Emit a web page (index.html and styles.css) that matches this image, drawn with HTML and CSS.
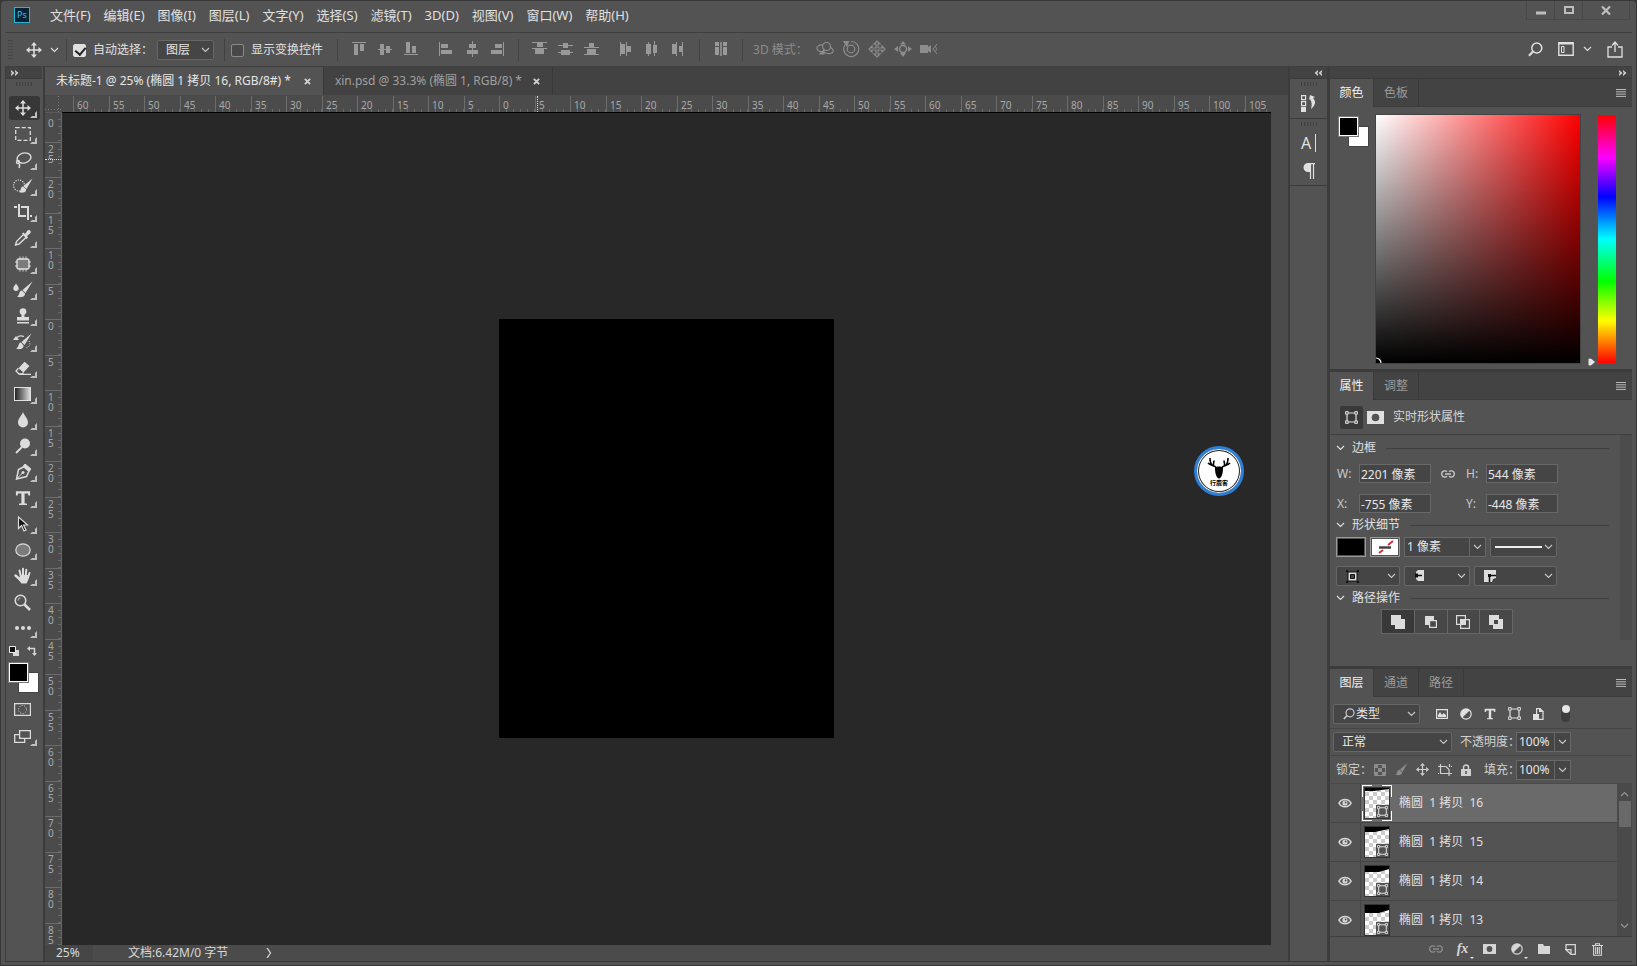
FILE: index.html
```html
<!DOCTYPE html>
<html lang="zh-CN">
<head>
<meta charset="utf-8">
<title>Photoshop</title>
<link rel="stylesheet" href="styles.css">
</head>
<body>
<svg class="sprite" aria-hidden="true">
  <symbol id="chev" viewBox="0 0 9 6"><path d="M1 1l3.500 3.500L8 1" fill="none" stroke="currentColor" stroke-width="1.100"/></symbol>
  <symbol id="move" viewBox="0 0 16 16"><path d="M8 2.500v11M2.500 8h11" stroke="currentColor" stroke-width="1.500"/><path d="M8 0l3 3.500H5zM8 16l3-3.500H5zM0 8l3.500-3v6zM16 8l-3.500-3v6z" fill="currentColor"/></symbol>
  <symbol id="brush" viewBox="0 0 18 18"><path d="M17 0L7 9l3.500 3.500z" fill="currentColor"/><path d="M6.500 9.500c-4 0-2.500 5-6 6.500 4 2 9.500.5 9.500-3z" fill="currentColor"/></symbol>
  <symbol id="box" viewBox="0 0 13 13"><path d="M2 2h9v9H2z" fill="none" stroke="currentColor" stroke-width="1.200"/><path d="M.6.600h2.600v2.600H.6zM9.800.600h2.600v2.600H9.800zM.6 9.800h2.600v2.600H.6zM9.800 9.800h2.600v2.600H9.800z" fill="#535353" stroke="currentColor"/></symbol>
  <symbol id="link" viewBox="0 0 14 8"><path d="M6 1.700C5.500 1 4.800.9 3.800.9a3 3 0 0 0 0 6.200c1 0 1.700-.2 2.200-.9M8 1.700c.5-.7 1.200-.8 2.200-.8a3 3 0 0 1 0 6.200c-1 0-1.700-.2-2.200-.9M4 4h6" fill="none" stroke="currentColor" stroke-width="1.300"/></symbol>
  <symbol id="search" viewBox="0 0 15 15"><circle cx="8.800" cy="6" r="5" fill="none" stroke="currentColor" stroke-width="1.500"/><path d="M5 9.500L1 13.800" stroke="currentColor" stroke-width="2"/></symbol>
  <symbol id="burger" viewBox="0 0 10 8"><path d="M0 .5h10M0 2.800h10M0 5.100h10M0 7.400h10" stroke="currentColor"/></symbol>
  <symbol id="half" viewBox="0 0 12 12"><circle cx="6" cy="6" r="5.200" fill="none" stroke="currentColor" stroke-width="1.200"/><path d="M9.800 2.200A5.400 5.400 0 0 0 2.200 9.800z" fill="currentColor"/></symbol>
  <symbol id="mask" viewBox="0 0 17 13"><path d="M0 0h17v13H0z" fill="currentColor"/><circle cx="8.500" cy="6.500" r="3.800" fill="#535353"/></symbol>
  <symbol id="tee" viewBox="0 0 14 14"><path d="M.8 1h12.400v3.800h-1.400L11.200 3H8.400v8.600l2.100.4v1.200h-7V12l2.100-.4V3H2.800l-.6 1.800H.8z" fill="currentColor"/></symbol>
  <symbol id="dblr" viewBox="0 0 8 6"><path d="M0 0l3.500 3L0 6V4l1-1-1-1zM4 0l3.500 3L4 6V4l1-1-1-1z" fill="currentColor"/></symbol>
  <symbol id="eye" viewBox="0 0 14 10"><path d="M1 5.200C3.500.2 10.500.2 13 5.200 10.500 10 3.500 10 1 5.200z" fill="none" stroke="currentColor" stroke-width="1.600"/><circle cx="7" cy="5" r="2.600" fill="currentColor"/><circle cx="7.600" cy="4.500" r=".9" fill="#535353"/></symbol>
  <symbol id="x" viewBox="0 0 8 8"><path d="M1 1l6 6M7 1L1 7" stroke="currentColor" stroke-width="2.200"/></symbol>
</svg>
<div class="window">
  <header class="menubar">
    <div class="logo">Ps</div>
    <nav class="menus">
      <button>文件(F)</button><button>编辑(E)</button><button>图像(I)</button><button>图层(L)</button><button>文字(Y)</button><button>选择(S)</button><button>滤镜(T)</button><button>3D(D)</button><button>视图(V)</button><button>窗口(W)</button><button>帮助(H)</button>
    </nav>
    <div class="winbtns">
      <button aria-label="最小化"><svg width="10" height="10"><path d="M0 8h10" stroke="currentColor" stroke-width="3"/></svg></button>
      <button aria-label="最大化"><svg width="10" height="8"><path d="M1 1h8v6H1z" fill="none" stroke="currentColor" stroke-width="2"/></svg></button>
      <button class="wide" aria-label="关闭"><svg width="10" height="9" viewBox="0 0 10 9"><path d="M1 .5l8 8M9 .5l-8 8" stroke="currentColor" stroke-width="2.200"/></svg></button>
    </div>
  </header>

  <div class="options">
    <i class="vgrip"></i>
    <button class="tool-pick" aria-label="移动工具"><svg width="16" height="16"><use href="#move"/></svg><svg width="9" height="6"><use href="#chev"/></svg></button>
    <i class="sep"></i>
    <label class="check"><input type="checkbox" checked><span>自动选择：</span></label>
    <div class="select pick-layer"><select aria-label="自动选择"><option>图层</option></select><svg width="9" height="6"><use href="#chev"/></svg></div>
    <i class="sep"></i>
    <label class="check"><input type="checkbox"><span>显示变换控件</span></label>
    <i class="sep"></i>
    <div class="aligns">
      <div class="trio">
      <button aria-label="顶对齐"><svg width="16" height="16"><path d="M1 1.500h14" stroke="currentColor"/><path d="M3 3h4v11H3zM9 3h4v7H9z" fill="currentColor"/></svg></button>
      <button aria-label="垂直居中"><svg width="16" height="16"><path d="M1 8.500h14" stroke="currentColor"/><path d="M3 3h4v11H3zM9 5h4v7H9z" fill="currentColor"/></svg></button>
      <button aria-label="底对齐"><svg width="16" height="16"><path d="M1 13.500h14" stroke="currentColor"/><path d="M3 1h4v11H3zM9 5h4v7H9z" fill="currentColor"/></svg></button>
      </div><div class="trio">
      <button aria-label="左对齐"><svg width="16" height="16"><path d="M1.500 1v14" stroke="currentColor"/><path d="M3 3h7v4H3zM3 9h11v4H3z" fill="currentColor"/></svg></button>
      <button aria-label="水平居中"><svg width="16" height="16"><path d="M8.500 0v16" stroke="currentColor"/><path d="M5 3h7v4H5zM3 9h11v4H3z" fill="currentColor"/></svg></button>
      <button aria-label="右对齐"><svg width="16" height="16"><path d="M13.500 1v14" stroke="currentColor"/><path d="M5 3h7v4H5zM1 9h11v4H1z" fill="currentColor"/></svg></button>
      </div>
    </div>
    <i class="sep"></i>
    <div class="aligns">
      <div class="trio">
      <button aria-label="按顶分布"><svg width="16" height="16"><path d="M0 1.500h15M0 7.500h15" stroke="currentColor"/><path d="M5 2h6v4H5zM3 8h9v5H3z" fill="currentColor"/></svg></button>
      <button aria-label="垂直居中分布"><svg width="16" height="16"><path d="M0 4.500h15M0 11.500h15" stroke="currentColor"/><path d="M5 2h5v5H5zM3 9h9v5H3z" fill="currentColor"/></svg></button>
      <button aria-label="按底分布"><svg width="16" height="16"><path d="M0 6.500h15M0 13.500h15" stroke="currentColor"/><path d="M5 2h5v4H5zM3 8h9v5H3z" fill="currentColor"/></svg></button>
      </div><div class="trio">
      <button aria-label="按左分布"><svg width="16" height="16"><path d="M1.500 1v14M7.500 1v14" stroke="currentColor"/><path d="M2 3h4v10H2zM8 5h4v6H8z" fill="currentColor"/></svg></button>
      <button aria-label="水平居中分布"><svg width="16" height="16"><path d="M3.500 1v14M9.500 0v15" stroke="currentColor"/><path d="M1 3h5v10H1zM8 4h4v8H8z" fill="currentColor"/></svg></button>
      <button aria-label="按右分布"><svg width="16" height="16"><path d="M5.500 1v14M11.500 1v14" stroke="currentColor"/><path d="M1 3h4v10H1zM8 5h4v6H8z" fill="currentColor"/></svg></button>
      </div>
    </div>
    <i class="sep"></i>
    <button class="auto" aria-label="自动对齐图层"><svg width="12" height="14"><path d="M0 0h4v4H0zM0 5h4v8H0zM8 0h4v4H8zM8 5h4v8H8z" fill="currentColor"/><path d="M6 0v14" stroke="currentColor" stroke-width="1.500"/></svg></button>
    <i class="sep"></i>
    <div class="mode3d"><span>3D 模式：</span>
      <button aria-label="旋转"><svg width="18" height="16" viewBox="0 0 18 16" fill="none" stroke="currentColor" stroke-width="1.200"><circle cx="10.500" cy="5.500" r="4"/><path d="M7 4C3 3 .5 6 1 8c1 3 6 3 9 4 5 2 8-1 7-3-.5-1-1.500-2-3-3"/><path d="M4 13l4-4v4z" fill="currentColor"/></svg></button>
      <button aria-label="滚动"><svg width="18" height="18" viewBox="0 0 18 18" fill="none" stroke="currentColor" stroke-width="1.200"><circle cx="9" cy="9" r="3.800"/><path d="M3.500 4.200a7.500 7.500 0 1 0 5.500-2.700"/><path d="M2 1.500h4.500L5 6z" fill="currentColor"/></svg></button>
      <button aria-label="拖动"><svg width="18" height="18" viewBox="0 0 18 18" fill="none" stroke="currentColor" stroke-width="1.200"><path d="M9 1l3 3h-2v4h4V6l3 3-3 3v-2h-4v4h2l-3 3-3-3h2v-4H4v2L1 9l3-3v2h4V4H6z"/></svg></button>
      <button aria-label="滑动"><svg width="18" height="18" viewBox="0 0 18 18"><circle cx="9" cy="9" r="3.500" fill="none" stroke="currentColor" stroke-width="1.500"/><path d="M9 1l3 3.500H6zM9 17l3-4H6zM0 9l4-3v6zM18 9l-4-3v6z" fill="currentColor"/></svg></button>
      <button aria-label="缩放"><svg width="18" height="14" viewBox="0 0 18 14"><path d="M0 3h8v2l3-2v8L8 9v2H0z" fill="currentColor"/><path d="M17 2l-4 5 4 5M15 4.500c2 1.500 2 3.500 0 5" fill="none" stroke="currentColor"/></svg></button>
    </div>
    <div class="opt-right">
      <button aria-label="搜索"><svg width="15" height="15"><use href="#search"/></svg></button>
      <button class="ws" aria-label="工作区"><svg width="16" height="14"><path d="M.8.800h14.400v12.400H.8z" fill="none" stroke="currentColor" stroke-width="1.400"/><path d="M1 1.500h14" stroke="currentColor" stroke-width="2"/><path d="M3.500 4.500h2.500v6H3.500z" fill="none" stroke="currentColor"/></svg><svg width="9" height="6"><use href="#chev"/></svg></button>
      <button aria-label="共享"><svg width="16" height="17" viewBox="0 0 16 17"><path d="M5 6H1v10h14V6h-4M8 11V1.500M5 4.500l3-3.500 3 3.500" fill="none" stroke="currentColor" stroke-width="1.300"/></svg></button>
    </div>
  </div>

  <div class="work">
    <aside class="tools">
      <div class="dockhead"><svg width="8" height="6"><use href="#dblr"/></svg></div>
      <i class="hgrip"></i>
      <div class="toollist">
        <button class="t on" aria-label="移动"><svg width="16" height="16"><use href="#move"/></svg></button>
        <button class="t" aria-label="选框"><svg width="16" height="14"><path d="M.7.700h14.600v12.600H.7z" fill="none" stroke="currentColor" stroke-width="1.300" stroke-dasharray="4 2"/></svg></button>
        <button class="t" aria-label="套索"><svg width="18" height="18" viewBox="0 0 18 18" fill="none" stroke="currentColor" stroke-width="1.400"><ellipse cx="10" cy="7" rx="7" ry="5" transform="rotate(-15 10 7)"/><path d="M4 9.500c-2 0-2 3 0 3s2-3 0-3M5 12c1 2 1 3 0 5"/></svg></button>
        <button class="t" aria-label="快速选择"><svg width="20" height="18" viewBox="0 0 20 18"><circle cx="6" cy="8.500" r="5.500" fill="none" stroke="currentColor" stroke-width="1.200" stroke-dasharray="1.200 1.200"/><path d="M19.500 1.500L10.500 9l3 3z" fill="currentColor"/><path d="M10 9.500c-3 0-1.500 4.500-4 5.500 3 1.500 8 .5 7-3z" fill="currentColor"/></svg></button>
        <button class="t" aria-label="裁剪"><svg width="18" height="16" viewBox="0 0 18 16" fill="none" stroke="currentColor" stroke-width="2"><path d="M0 3h3M5 0v12h7M7 3h7v13M16 12h2"/></svg></button>
        <button class="t" aria-label="吸管"><svg width="18" height="18" viewBox="0 0 18 18"><path d="M10 5l-7.500 7.500-1 3.500 3.500-1L12.500 8" fill="none" stroke="currentColor" stroke-width="1.400"/><path d="M8 4.500l1.500-1L11 5l2.500-3.500c2-1.500 4 .5 3 2.500L13 7l1 1.500-1.500 1.500z" fill="currentColor"/></svg></button>
        <button class="t" aria-label="修补"><svg width="18" height="16" viewBox="0 0 18 16"><rect x="3" y="3" width="12" height="10" rx="2" fill="#7b7b7b" stroke="currentColor" stroke-width="1.400"/><path d="M6 .5V4M9 .5V4M12 .5V4M6 12v3.500M9 12v3.500M12 12v3.500M1 6h3M1 10h3M14 6h3M14 10h3" stroke="currentColor"/></svg></button>
        <button class="t" aria-label="混合器画笔"><svg width="20" height="18" viewBox="0 0 20 18"><path d="M3 2.500c1 2 2.700 3 2.700 4.700a2.700 2.700 0 0 1-5.400 0C.3 5.500 2 4.500 3 2.500zM19.500 .5L9.500 9l3 3zM9 9.500c-3.500 0-2 5-5 6 3 1.500 8.500 .5 8-3z" fill="currentColor"/></svg></button>
        <button class="t" aria-label="图章"><svg width="14" height="16" viewBox="0 0 14 16"><circle cx="7" cy="3.500" r="3.300" fill="currentColor"/><path d="M5.500 5h3v4H13v3.500H1V9h4.500zM1 14h12v1.500H1z" fill="currentColor"/></svg></button>
        <button class="t" aria-label="历史画笔"><svg width="20" height="18" viewBox="0 0 20 18"><path d="M18.500 .5L8.500 9l3 3zM8 9.500c-3 0-2 5-5 6 3 1.500 8 .5 7.500-3zM0 7l3-4 3 4z" fill="currentColor"/><path d="M4 4.500c2-2 4-2 7-1" fill="none" stroke="currentColor" stroke-width="1.300"/><path d="M16 8c2 3 1 6-4 7" fill="none" stroke="currentColor" stroke-dasharray="1 1.500"/></svg></button>
        <button class="t" aria-label="橡皮擦"><svg width="16" height="15" viewBox="0 0 16 15"><path d="M9.500.8L14.500 5l-6 6.500-5-4.300z" fill="currentColor"/><path d="M3.500 7.200L1 10l3 3h3l1.500-1.500M4 13.300h12" fill="none" stroke="currentColor" stroke-width="1.300"/></svg></button>
        <button class="t" aria-label="渐变"><i class="grad"></i></button>
        <button class="t" aria-label="模糊"><svg width="12" height="16" viewBox="0 0 12 16"><path d="M6 0c1.500 4 5 6.500 5 10.500A5 5 0 0 1 6 15.500a5 5 0 0 1-5-5C1 6.500 4.500 4 6 0z" fill="currentColor"/></svg></button>
        <button class="t" aria-label="减淡"><svg width="16" height="16" viewBox="0 0 16 16"><circle cx="10" cy="5.500" r="5" fill="currentColor"/><path d="M7 9l-6 6" stroke="currentColor" stroke-width="1.800"/></svg></button>
        <button class="t" aria-label="钢笔"><svg width="16" height="16" viewBox="0 0 16 16"><path d="M9.500 2.500L14 7l-2.500 5.500L1.500 15l2-9.500z" fill="none" stroke="currentColor" stroke-width="1.500"/><path d="M10 0l6 5-2 2.500-6-5zM1.500 15l6-6" fill="currentColor" stroke="currentColor"/><circle cx="8" cy="8.500" r="1.500" fill="currentColor"/></svg></button>
        <button class="t" aria-label="文字"><svg width="16" height="16"><use href="#tee"/></svg></button>
        <button class="t" aria-label="路径选择"><svg width="12" height="16" viewBox="0 0 12 16"><path d="M1.500 1v11.500l3-3 2.500 5.500 2-1-2.500-5h4z" fill="#111" stroke="currentColor" stroke-width="1.200"/></svg></button>
        <button class="t" aria-label="椭圆"><svg width="16" height="14"><ellipse cx="8" cy="7" rx="7.200" ry="6.200" fill="#7b7b7b" stroke="currentColor" stroke-width="1.200"/></svg></button>
        <button class="t" aria-label="抓手"><svg width="18" height="18" viewBox="0 0 18 18"><path d="M1.500 8.500L6 12.500" stroke="currentColor" stroke-width="2.400" stroke-linecap="round"/><path d="M5.500 3.500L7 10M9 1.700V9M12.300 2.800L11.500 10M15.500 6L13.500 12" stroke="currentColor" stroke-width="2" stroke-linecap="round"/><path d="M5 11l2-3h7.500c.5 4-1 7-2 8.500H7.500C6 15 5 13 4 12z" fill="currentColor"/></svg></button>
        <button class="t last" aria-label="缩放"><svg width="17" height="17" viewBox="0 0 17 17"><circle cx="6.500" cy="6.500" r="5.300" fill="none" stroke="currentColor" stroke-width="1.500"/><path d="M4 6.500C4 5 5 4 6.500 4" fill="none" stroke="currentColor"/><path d="M10.500 10.500l5.500 5.500" stroke="currentColor" stroke-width="2.600"/></svg></button>
        <button class="t" aria-label="编辑工具栏"><svg width="16" height="4"><circle cx="2" cy="2" r="2" fill="currentColor"/><circle cx="8" cy="2" r="2" fill="currentColor"/><circle cx="14" cy="2" r="2" fill="currentColor"/></svg></button>
      </div>
      <div class="miniswap">
        <svg width="10" height="10"><path d="M4 4h6v6H4z" fill="#d6d6d6"/><path d="M.5.500h6v6h-6z" fill="#111" stroke="#eee"/></svg>
        <svg width="10" height="10" viewBox="0 0 10 10"><path d="M2 2.500h5.500V8" fill="none" stroke="#d6d6d6" stroke-width="1.500"/><path d="M0 2.500L3 0v5zM7.500 10L5 7h5z" fill="#d6d6d6"/></svg>
      </div>
      <div class="fgbg"><button class="bg" aria-label="背景色"></button><button class="fg" aria-label="前景色"></button></div>
      <button class="t last" aria-label="快速蒙版"><svg width="17" height="13"><path d="M.6.600h15.800v11.800H.6z" fill="none" stroke="currentColor" stroke-width="1.200"/><circle cx="8.500" cy="6.500" r="4" fill="none" stroke="currentColor" stroke-dasharray="1 1.500"/></svg></button>
      <button class="t" aria-label="屏幕模式"><svg width="17" height="13"><path d="M5.600.700h10.800v7.600H5.600z" fill="none" stroke="currentColor" stroke-width="1.300"/><path d="M5 4.700H.7v7.600h10V9" fill="none" stroke="currentColor" stroke-width="1.300"/></svg></button>
    </aside>

    <main class="doc">
      <div class="tabs">
        <div class="tab on"><span>未标题-1 @ 25% (椭圆 1 拷贝 16, RGB/8#) *</span><button aria-label="关闭"><svg width="7" height="7"><use href="#x"/></svg></button></div>
        <div class="tab"><span>xin.psd @ 33.3% (椭圆 1, RGB/8) *</span><button aria-label="关闭"><svg width="7" height="7"><use href="#x"/></svg></button></div>
      </div>
      <div class="view">
        <div class="corner"></div>
        <div class="hruler"><span>60</span><span>55</span><span>50</span><span>45</span><span>40</span><span>35</span><span>30</span><span>25</span><span>20</span><span>15</span><span>10</span><span>5</span><span>0</span><span class="hcur">5</span><span>10</span><span>15</span><span>20</span><span>25</span><span>30</span><span>35</span><span>40</span><span>45</span><span>50</span><span>55</span><span>60</span><span>65</span><span>70</span><span>75</span><span>80</span><span>85</span><span>90</span><span>95</span><span>100</span><span>105</span></div>
        <div class="vruler"><span class="cut">0</span><span class="vcur">25</span><span>20</span><span>15</span><span>10</span><span>5</span><span>0</span><span>5</span><span>10</span><span>15</span><span>20</span><span>25</span><span>30</span><span>35</span><span>40</span><span>45</span><span>50</span><span>55</span><span>60</span><span>65</span><span>70</span><span>75</span><span>80</span><span class="end">85</span></div>
        <div class="canvas">
          <div class="artboard"></div>
          <div class="badge">
            <svg width="24" height="21" viewBox="0 0 24 21"><path d="M8 10c0-2 8-2 8 0 0 6-1.500 10-4 10.500C9.500 20 8 16 8 10z"/><path d="M9.500 10C8 7 4 8 1 5M5 7C3 5 3 3 3 0M7 8C5.500 6 7 5 7 2.500M14.500 10C16 7 20 8 23 5M19 7c2-2 2-4 2-7M17 8c1.500-2 0-3 0-5.500" fill="none" stroke="#000" stroke-width="1.600"/></svg>
            <span>行鹿客</span>
          </div>
        </div>
      </div>
      <div class="status"><span class="zoom">25%</span><span class="info">文档:6.42M/0 字节</span><svg width="6" height="10"><path d="M1 0l3.500 5L1 10" fill="none" stroke="currentColor" stroke-width="1.300"/></svg></div>
    </main>

    <aside class="strip">
      <div class="dockhead end"><svg class="flip" width="8" height="6"><use href="#dblr"/></svg></div>
      <div class="cell"><i class="hgrip"></i>
        <button aria-label="历史记录"><svg width="15" height="18" viewBox="0 0 15 18"><path d="M.6 1.600h4v4h-4zM.6 7.600h4v4h-4z" fill="none" stroke="currentColor" stroke-width="1.200"/><path d="M0 13h5v5H0zM8 6l1-5 5 2-2 1c3 3 3 7-2 11 1-4 1-7-1-10z" fill="currentColor"/></svg></button>
      </div>
      <div class="cell"><i class="hgrip"></i>
        <button class="char" aria-label="字符">A</button>
        <button aria-label="段落"><svg width="12" height="16" viewBox="0 0 12 16"><path d="M7 9H5a4.500 4.500 0 0 1 0-9h7v1.200H7z" fill="currentColor"/><path d="M7.500 1v15M10.500 1v15" stroke="currentColor" stroke-width="1.200"/></svg></button>
      </div>
    </aside>

    <aside class="panels">
      <div class="dockhead end"><svg width="8" height="6"><use href="#dblr"/></svg></div>
      <section class="panel">
        <div class="ptabs"><button class="on">颜色</button><button>色板</button><button class="menu" aria-label="面板菜单"><svg width="10" height="8"><use href="#burger"/></svg></button></div>
        <div class="color">
          <div class="fgbg"><button class="bg" aria-label="背景色"></button><button class="fg" aria-label="前景色"></button></div>
          <div class="field"><svg width="6" height="6"><path d="M0 1a5 5 0 0 1 5 5" fill="none" stroke="#fff" stroke-width="1.200"/></svg></div>
          <div class="hue"><svg width="8" height="8"><path d="M.5 1.500C1 0 2.500.200 3.500 1L7 4 3.500 7C2.500 7.800 1 8 .5 6.500z" fill="#e6e6e6"/></svg></div>
        </div>
      </section>
      <section class="panel props">
        <div class="ptabs"><button class="on">属性</button><button>调整</button><button class="menu" aria-label="面板菜单"><svg width="10" height="8"><use href="#burger"/></svg></button></div>
        <div class="kind"><button class="kbox" aria-label="形状"><svg width="13" height="13"><use href="#box"/></svg></button><button aria-label="蒙版"><svg width="17" height="13"><use href="#mask"/></svg></button><span>实时形状属性</span></div>
        <div class="pbody">
          <div class="pmain">
            <h3><svg width="9" height="6"><use href="#chev"/></svg>边框</h3>
            <div class="geo">
              <label for="w">W:</label><input id="w" value="2201 像素"><svg width="14" height="8"><use href="#link"/></svg><label for="h">H:</label><input id="h" value="544 像素">
              <label for="gx">X:</label><input id="gx" value="-755 像素"><i></i><label for="gy">Y:</label><input id="gy" value="-448 像素">
            </div>
            <h3><svg width="9" height="6"><use href="#chev"/></svg>形状细节</h3>
            <div class="prow">
              <button class="fill" aria-label="填充"></button>
              <button class="fill none" aria-label="描边"><svg width="24" height="14"><path d="M6 13l4-3M15 5l5-4" stroke="#d03038" stroke-width="2"/><path d="M6 7.500h12" stroke="#444" stroke-width="2.500"/></svg></button>
              <div class="combo stroke-w"><input aria-label="描边宽度" value="1 像素"><button aria-label="展开"><svg width="9" height="6"><use href="#chev"/></svg></button></div>
              <div class="select stroke-t"><select aria-label="描边类型"><option></option></select><b></b><svg width="9" height="6"><use href="#chev"/></svg></div>
            </div>
            <div class="prow">
              <div class="select a1"><select aria-label="描边对齐"><option></option></select><svg class="glyph" width="13" height="13" viewBox="0 0 13 13"><path d="M2 2h9v9H2z" fill="#ddd" stroke="#111"/><path d="M4.500 4.500h4v4h-4z" fill="#444" stroke="#111"/><path d="M0 0h2v2H0zM11 0h2v2h-2zM0 11h2v2H0zM11 11h2v2h-2z" fill="#111"/></svg><svg width="9" height="6"><use href="#chev"/></svg></div>
              <div class="select a2"><select aria-label="端点"><option></option></select><svg class="glyph" width="10" height="11"><path d="M4 0h6v11H4l-2-2V2z" fill="#ddd"/><path d="M1 3.500h3v4H1z" fill="#111"/><path d="M2 5.500h6" stroke="#111" stroke-width="1.500"/></svg><svg width="9" height="6"><use href="#chev"/></svg></div>
              <div class="select a3"><select aria-label="角点"><option></option></select><svg class="glyph" width="12" height="12"><path d="M0 0h12v8l-3 1-1 3H0z" fill="#ddd"/><path d="M5.500 12V5.500H12" fill="none" stroke="#111" stroke-width="1.500"/><path d="M4 4h3v3H4z" fill="#111"/></svg><svg width="9" height="6"><use href="#chev"/></svg></div>
            </div>
            <h3><svg width="9" height="6"><use href="#chev"/></svg>路径操作</h3>
            <div class="ops">
              <button class="on" aria-label="合并"><svg width="14" height="14"><path d="M0 0h10v4h4v10H4v-4H0z" fill="currentColor"/></svg></button>
              <button aria-label="减去"><svg width="14" height="14"><path d="M1 1h9v4H5v5H1z" fill="currentColor"/><path d="M5.600 5.600h6.800v6.800H5.600z" fill="none" stroke="currentColor" stroke-width="1.200"/></svg></button>
              <button aria-label="相交"><svg width="14" height="14"><path d="M.6.600h8.800v8.800H.6zM4.600 4.600h8.800v8.800H4.600z" fill="none" stroke="currentColor" stroke-width="1.200"/><path d="M4.500 4.500h5v5h-5z" fill="currentColor"/></svg></button>
              <button aria-label="排除"><svg width="14" height="14"><path d="M0 0h10v4h4v10H4v-4H0zM5 5v4h4V5z" fill="currentColor" fill-rule="evenodd"/></svg></button>
            </div>
          </div>
          <i class="track"></i>
        </div>
      </section>
      <section class="panel layers">
        <div class="ptabs"><button class="on">图层</button><button>通道</button><button>路径</button><button class="menu" aria-label="面板菜单"><svg width="10" height="8"><use href="#burger"/></svg></button></div>
        <div class="lrow filter">
          <div class="select type"><svg class="glyph" width="12" height="12"><use href="#search"/></svg><select aria-label="筛选"><option>类型</option></select><svg width="9" height="6"><use href="#chev"/></svg></div>
          <div class="ficons">
            <button aria-label="像素"><svg width="12" height="10"><path d="M.6.600h10.800v8.800H.6z" fill="none" stroke="currentColor" stroke-width="1.200"/><path d="M2 8V6l2-3 2 3 1.500-2L10 6v2z" fill="currentColor"/></svg></button>
            <button aria-label="调整"><svg width="12" height="12"><use href="#half"/></svg></button>
            <button aria-label="文字"><svg width="12" height="12"><use href="#tee"/></svg></button>
            <button aria-label="形状"><svg width="13" height="13"><use href="#box"/></svg></button>
            <button aria-label="智能对象"><svg width="11" height="12"><path d="M3.600 6V.6H7l3 3v7.800H6" fill="none" stroke="currentColor" stroke-width="1.200"/><path d="M0 6h6v6H0zM6 0l5 4H6z" fill="currentColor"/></svg></button>
          </div>
          <button class="toggle" aria-label="开关筛选"><i></i></button>
        </div>
        <div class="lrow">
          <div class="select blend"><select aria-label="混合模式"><option>正常</option></select><svg width="9" height="6"><use href="#chev"/></svg></div>
          <label class="plab" for="op">不透明度：</label>
          <div class="combo pct"><input id="op" value="100%"><button aria-label="展开"><svg width="9" height="6"><use href="#chev"/></svg></button></div>
        </div>
        <div class="lrow lock">
          <div class="locks"><span>锁定：</span>
            <button class="dim" aria-label="锁定透明像素"><svg width="12" height="12"><path d="M.5.500h11v11H.5z" fill="none" stroke="currentColor"/><path d="M1 1h3v3H1zM8 1h3v3H8zM4 4h4v4H4zM1 8h3v3H1zM8 8h3v3H8z" fill="currentColor"/></svg></button>
            <button class="dim" aria-label="锁定图像像素"><svg width="13" height="13"><use href="#brush"/></svg></button>
            <button aria-label="锁定位置"><svg width="13" height="13"><use href="#move"/></svg></button>
            <button aria-label="防止嵌套"><svg width="14" height="12"><path d="M0 2.500h8l3 3V12M2.500 0v9.500H14M11.500 0v3M13 2.500h1M0 9.500h1" fill="none" stroke="currentColor" stroke-width="1.200"/></svg></button>
            <button aria-label="锁定全部"><svg width="10" height="12"><path d="M2.500 5V3.500a2.500 2.500 0 0 1 5 0V5" fill="none" stroke="currentColor" stroke-width="1.500"/><path d="M0 5h10v7H0z" fill="currentColor"/><path d="M5 7v3" stroke="#535353" stroke-width="1.500"/></svg></button>
          </div>
          <label class="plab" for="fi">填充：</label>
          <div class="combo pct"><input id="fi" value="100%"><button aria-label="展开"><svg width="9" height="6"><use href="#chev"/></svg></button></div>
        </div>
        <div class="listwrap">
          <ul class="list">
            <li class="sel"><button class="vis" aria-label="可见"><svg width="14" height="10"><use href="#eye"/></svg></button><div class="thumb"><svg width="24" height="31"><path d="M0 0h24v1L9 3H0z"/></svg><i><svg width="11" height="11"><use href="#box"/></svg></i></div><span>椭圆&nbsp; 1 拷贝&nbsp; 16</span></li>
            <li><button class="vis" aria-label="可见"><svg width="14" height="10"><use href="#eye"/></svg></button><div class="thumb"><svg width="24" height="31"><path d="M0 0h24v2L10 5H0z"/></svg><i><svg width="11" height="11"><use href="#box"/></svg></i></div><span>椭圆&nbsp; 1 拷贝&nbsp; 15</span></li>
            <li><button class="vis" aria-label="可见"><svg width="14" height="10"><use href="#eye"/></svg></button><div class="thumb"><svg width="24" height="31"><path d="M0 0h24v3l-10 3H0z"/></svg><i><svg width="11" height="11"><use href="#box"/></svg></i></div><span>椭圆&nbsp; 1 拷贝&nbsp; 14</span></li>
            <li><button class="vis" aria-label="可见"><svg width="14" height="10"><use href="#eye"/></svg></button><div class="thumb"><svg width="24" height="31"><path d="M0 0h24v5l-10 3H0z"/></svg><i><svg width="11" height="11"><use href="#box"/></svg></i></div><span>椭圆&nbsp; 1 拷贝&nbsp; 13</span></li>
          </ul>
          <div class="lscroll"><svg class="up" width="9" height="6"><use href="#chev"/></svg><i></i><svg width="9" height="6"><use href="#chev"/></svg></div>
        </div>
        <footer class="lfoot">
          <button class="dim" aria-label="链接图层"><svg width="14" height="8"><use href="#link"/></svg></button>
          <button class="fx" aria-label="图层样式">fx</button>
          <button aria-label="添加蒙版"><svg width="13" height="10"><use href="#mask"/></svg></button>
          <button class="more" aria-label="调整图层"><svg width="12" height="12"><use href="#half"/></svg></button>
          <button aria-label="新建组"><svg width="12" height="10"><path d="M0 0h5l1 2h6v8H0z" fill="currentColor"/></svg></button>
          <button aria-label="新建图层"><svg width="11" height="11"><path d="M1 5V.7h9.300v9.600H6L.7 5.600H6v4" fill="none" stroke="currentColor" stroke-width="1.300"/></svg></button>
          <button aria-label="删除"><svg width="11" height="13"><path d="M0 2.500h11M3.500 2V.7h4V2M1.600 3v9.300h7.800V3M3.700 4v7M5.500 4v7M7.300 4v7" fill="none" stroke="currentColor" stroke-width="1.100"/></svg></button>
        </footer>
      </section>
    </aside>
  </div>
</div>
</body>
</html>
```
FILE: styles.css
```css
* { box-sizing: border-box; }
body { margin: 0; background: #383838; font-family: "Noto Sans", "Noto Sans CJK SC", sans-serif; font-size: 12px; line-height: 16px; color: #e0e0e0; }
button, input, select { font: inherit; color: inherit; background: none; border: 0; padding: 0; margin: 0; }
svg { display: block; flex: none; }
button { display: flex; align-items: center; justify-content: center; }
h3 { margin: 0; font-weight: normal; font-size: 12px; }
ul { margin: 0; padding: 0; list-style: none; }
.sprite { position: absolute; width: 0; height: 0; }
.window { display: flex; flex-direction: column; height: 100vh; min-height: 900px; overflow: hidden; background: #535353; border: 1px solid #383838; border-radius: 4px 4px 0 0; padding: 0 4px 3px; }

/* Menu bar */
.menubar { display: flex; align-items: center; height: 31px; padding-left: 9px; font-size: 13px; }
.logo { width: 16px; height: 16px; border: 1px solid #25b5d8; background: #062336; color: #2cc0e6; font-size: 9px; line-height: 13px; text-align: center; margin: 0 20px 4px 0; }
.menus { display: flex; gap: 13px; flex: 1; padding-bottom: 4px; }
.winbtns { display: flex; align-self: flex-start; border: 1px solid #484848; border-top: 0; color: #bdbdbd; margin-right: 2px; }
.winbtns button { width: 28px; height: 18px; border-right: 1px solid #484848; }
.winbtns .wide { width: 46px; border: 0; }

/* Options bar */
.options { display: flex; align-items: center; height: 35px; padding-top: 1px; border: 1px solid #404040; border-width: 1px 0; flex: none; }
.vgrip { width: 5px; height: 21px; margin: 0 13px 0 3px; background: repeating-linear-gradient(#464646 0 1px, transparent 1px 3px); }
.tool-pick { gap: 8px; padding-right: 7px; }
.sep { width: 1px; height: 22px; background: #424242; flex: none; }
.check { display: flex; align-items: center; gap: 7px; padding: 0 6px; }
.check input { appearance: none; width: 13px; height: 13px; border: 1px solid #8a8a8a; border-radius: 2px; background: #484848; }
.check input:checked { background: #e0e0e0; border-color: #e0e0e0; position: relative; }
.check input:checked::after { content: ""; position: absolute; left: 3px; top: 0; width: 5px; height: 8px; border: solid #222; border-width: 0 2px 2px 0; transform: rotate(40deg); }
.check + .sep { margin-left: 8px; }
.select { position: relative; display: flex; height: 20px; background: #454545; border: 1px solid #666; border-radius: 2px; color: #e6e6e6; }
.select select { appearance: none; width: 100%; padding: 0 8px; line-height: 16px; outline: 0; }
.select svg { position: absolute; right: 3px; top: 6px; pointer-events: none; color: #c8c8c8; }
.select .glyph { right: auto; left: 9px; top: 3px; }
.pick-layer { width: 57px; margin-right: 10px; margin-left: -2px; }
.aligns { display: flex; gap: 19px; padding: 0 12px 3px 13px; color: #999; }
.trio { display: flex; gap: 10px; }
.auto { padding: 0 15px 3px; color: #999; }
.mode3d { display: flex; align-items: center; gap: 8px; padding-left: 10px; color: #8c8c8c; }
.mode3d button { padding-bottom: 3px; }
.opt-right { display: flex; align-items: center; gap: 15px; margin-left: auto; padding: 0 9px 2px 0; }
.ws { gap: 9px; }

/* Work area */
.work { display: flex; flex: 1; min-height: 0; background: #3c3c3c; border-bottom: 1px solid #383838; }
.dockhead { display: flex; align-items: center; height: 12px; padding: 0 5px; background: #434343; border-bottom: 1px solid #3a3a3a; color: #cfcfcf; flex: none; align-self: stretch; }
.dockhead.end { justify-content: flex-end; }
.flip { transform: scaleX(-1); }
.hgrip { width: 16px; height: 4px; background: repeating-linear-gradient(90deg, #404040 0 1px, transparent 1px 3px); }
.tools { display: flex; flex-direction: column; align-items: center; width: 38px; flex: none; background: #535353; border-left: 1px solid #3c3c3c; padding-right: 1px; }
.tools > .hgrip { margin: 3px 0 10px; }
.toollist { display: flex; flex-direction: column; gap: 2px; }
.t { position: relative; width: 31px; height: 24px; padding-right: 3px; border-radius: 3px; color: #dcdcdc; }
.t.on { background: #373737; }
.t::after { content: ""; position: absolute; right: 3px; bottom: 2px; border: 2px solid; border-color: transparent #c0c0c0 #c0c0c0 transparent; width: 3px; height: 3px; }
.t.last::after { display: none; }
.grad { width: 17px; height: 14px; border: 1px solid #e0e0e0; background: linear-gradient(90deg, #222, #ddd); }
.miniswap { display: flex; gap: 8px; margin: 6px 3px 7px 0; }
.fgbg { position: relative; width: 29px; height: 29px; flex: none; }
.fgbg button { position: absolute; width: 19px; height: 19px; }
.fgbg .fg { left: 0; top: 0; background: #000; border: 1px solid #fff; outline: 1px solid #777; }
.fgbg .bg { right: 0; bottom: 0; background: #fff; outline: 1px solid #444; }
.tools .fgbg { margin: 0 1px 5px 0; }
.tools > .t + .t { margin-top: 3px; }

/* Document */
.doc { display: flex; flex-direction: column; flex: 1; min-width: 0; margin-left: 2px; background: #4b4b4b; }
.tabs { display: flex; height: 29px; background: #424242; border-bottom: 1px solid #4a4a4a; flex: none; }
.tab { display: flex; align-items: center; gap: 11px; padding: 0 12px 0 11px; border-right: 1px solid #383838; color: #a0a0a0; white-space: nowrap; }
.tab.on { background: #535353; color: #e6e6e6; gap: 13px; }
.tab button { color: #cfcfcf; }
.view { display: grid; grid-template: 17px 1fr / 17px 1fr 17px; flex: 1; min-height: 0; }
.corner { background: repeating-linear-gradient(90deg, #777 0 1px, transparent 1px 3px) 0 13px / 100% 1px no-repeat, repeating-linear-gradient(#777 0 1px, transparent 1px 3px) 13px 0 / 1px 100% no-repeat; border-bottom: 1px solid #5c5c5c; }
.hruler { grid-column: 2 / 4; display: flex; overflow: hidden; padding-left: 11px; margin-right: 17px; border-bottom: 1px solid #000; font-size: 10px; line-height: 19px; color: #a8a8a8; }
.hruler span { position: relative; flex: 0 0 36px; padding-left: 3px; border-left: 1px solid #6c6c6c; background: repeating-linear-gradient(90deg, transparent 0 6px, #686868 6px 7px) 0 100% / 100% 3px no-repeat; }
.hruler span:nth-child(even) { flex-basis: 35px; }
.hcur::before { content: ""; position: absolute; left: 1px; top: 0; height: 16px; border-left: 1px dotted #ddd; }
.vruler { overflow: hidden; border-right: 1px solid #686868; font-size: 10px; line-height: 10px; color: #a8a8a8; }
.vruler span { position: relative; display: block; height: 36px; padding: 1px 9px 0 3px; border-top: 1px solid #6c6c6c; word-break: break-all; background: repeating-linear-gradient(transparent 0 6px, #686868 6px 7px) 100% 0 / 3px 100% no-repeat; }
.vruler span:nth-child(even) { height: 35px; }
.vruler .cut { height: 29px; padding-top: 5px; border: 0; }
.vruler .end { height: 24px; }
.vcur::before { content: ""; position: absolute; left: 0; top: 16px; width: 16px; border-top: 1px dotted #ddd; }
.canvas { position: relative; background: #282828; overflow: hidden; }
.artboard { position: absolute; left: 437px; top: 206px; width: 335px; height: 419px; background: #000; }
.badge { position: absolute; right: 27px; top: 333px; width: 50px; height: 50px; border-radius: 50%; background: #fff; border: 3px solid #2d7fd6; box-shadow: inset 0 0 0 1px #fff, inset 0 0 0 2px #222; display: flex; flex-direction: column; align-items: center; padding-top: 9px; color: #000; font: bold 6px/8px "Noto Sans CJK SC", sans-serif; }
.status { display: flex; align-items: center; height: 16px; color: #d8d8d8; flex: none; }
.zoom { width: 48px; padding-left: 11px; background: #464646; line-height: 16px; }
.info { margin: 0 38px 0 35px; }

/* Collapsed dock */
.strip { display: flex; flex-direction: column; width: 39px; flex: none; background: #535353; border-left: 2px solid #3c3c3c; }
.cell { display: flex; flex-direction: column; align-items: center; gap: 11px; padding: 3px 0 6px; border-bottom: 1px solid #3c3c3c; }
.strip .cell .hgrip { margin-bottom: -3px; }
.char { width: 15px; justify-content: flex-start; font-size: 16px; line-height: 18px; border-right: 1px solid #e0e0e0; }

/* Panels */
.panels { display: flex; flex-direction: column; width: 302px; flex: none; margin-left: 3px; background: #3c3c3c; }
.panel { background: #535353; margin-bottom: 3px; flex: none; }
.ptabs { display: flex; height: 28px; background: #434343; border-bottom: 1px solid #3c3c3c; }
.ptabs button { width: 45px; color: #9a9a9a; border-right: 1px solid #3a3a3a; }
.ptabs .on { background: #535353; color: #f0f0f0; height: 28px; width: 44px; }
.ptabs .menu { width: auto; margin-left: auto; border: 0; padding-right: 6px; color: #bbb; }
.color { display: flex; padding: 7px 15px 5px 9px; }
.color .fgbg { margin: 3px 7px 0 0; }
.field { flex: 1; height: 250px; display: flex; align-items: flex-end; background: linear-gradient(transparent, #000), linear-gradient(90deg, #fff, #f00); border: 1px solid #444; }
.hue { position: relative; width: 20px; margin-left: 16px; background: linear-gradient(#f00, #f0f 17%, #00f 33%, #0ff 50%, #0f0 67%, #ff0 83%, #f00); border: 1px solid #555; }
.hue svg { position: absolute; left: -10px; bottom: -3px; }
.kind { display: flex; align-items: center; gap: 4px; height: 35px; padding-left: 10px; border-bottom: 1px solid #404040; }
.kind span { margin-left: 5px; color: #d6d6d6; }
.kbox { width: 23px; height: 23px; background: #393939; border-radius: 2px; }
.pbody { display: flex; justify-content: space-between; height: 231px; }
.track { width: 12px; height: 205px; background: #4c4c4c; }
.pmain { width: 279px; padding: 5px 0 0 6px; }
.pmain h3 { display: flex; align-items: center; gap: 7px; height: 16px; }
.pmain h3::after { content: ""; flex: 1; height: 1px; margin-left: 3px; background: #404040; }
.geo { display: grid; grid-template-columns: 22px 72px 10px 14px 11px 20px 72px; grid-auto-rows: 19px; row-gap: 11px; align-items: center; padding: 8px 0 4px 1px; color: #c8c8c8; }
.geo > svg, .geo > i { grid-column: 4; }
.geo > svg + label, .geo > i + label { grid-column: 6; }
.geo input, .combo { background: #454545; border: 1px solid #686868; height: 19px; color: #e6e6e6; }
.geo input { width: 72px; padding: 0 1px; }
.prow { display: flex; height: 20px; margin-bottom: 9px; }
h3 + .prow { margin-top: 4px; }
.prow > * + * { margin-left: 4px; }
.prow + h3 { margin-top: -5px; }
.fill { width: 30px; height: 20px; background: #000; border: 1px solid #999; box-shadow: inset 0 0 0 1px #535353; }
.fill.none { background: #fff; }
.combo { display: flex; }
.combo input { flex: 1; min-width: 0; padding-left: 2px; }
.combo button { width: 16px; border-left: 1px solid #686868; color: #c8c8c8; }
.prow .combo { width: 82px; height: 20px; }
.stroke-t { flex: 0 0 67px; }
.stroke-t b { position: absolute; left: 4px; top: 8px; width: 47px; height: 2px; background: #eee; }
.a1 { width: 64px; }
.a2 { width: 66px; }
.a3 { width: 83px; }
.ops { display: flex; width: 132px; margin: 3px 0 0 45px; border: 1px solid #666; background: #484848; }
.ops button { flex: 1; height: 23px; border-right: 1px solid #666; color: #dcdcdc; }
.ops button:last-child { border: 0; }
.ops .on { background: #393939; }

/* Layers */
.layers { display: flex; flex-direction: column; flex: 1; min-height: 0; margin-bottom: 0; }
.lrow { display: flex; align-items: center; height: 27px; padding-left: 3px; border-bottom: 1px solid #454545; flex: none; }
.lrow.filter { height: 32px; padding-top: 2px; }
.lrow.lock { height: 28px; border-bottom-color: #4a4a4a; }
.type { width: 87px; }
.type select { padding-left: 22px; }
.blend { width: 119px; }
.ficons { display: flex; padding-left: 10px; }
.ficons button { width: 24px; height: 20px; }
.toggle { width: 9px; height: 17px; margin-left: 11px; border-radius: 5px; background: #3c3c3c; align-items: flex-start; }
.toggle i { width: 8px; height: 8px; border-radius: 50%; background: #e6e6e6; }
.plab { margin-left: 8px; width: 56px; white-space: nowrap; color: #d0d0d0; }
.pct { width: 55px; height: 20px; }
.locks { display: flex; align-items: center; padding-left: 3px; color: #d0d0d0; width: 144px; }
.locks span { width: 33px; white-space: nowrap; }
.locks button { width: 22px; height: 20px; }
.locks + .plab { width: 32px; margin-left: 7px; }
.dim { color: #8c8c8c; }
.listwrap { display: flex; flex: 1; min-height: 0; }
.list { flex: 1; overflow: hidden; }
.list li { display: flex; align-items: center; height: 39px; border-bottom: 1px solid #454545; }
.list .sel { background: linear-gradient(90deg, #535353 30px, #6a6a6a 30px); }
.vis { width: 31px; height: 38px; border-right: 1px solid #454545; color: #d6d6d6; }
.thumb { position: relative; margin: 0 9px 0 3px; width: 26px; height: 32px; border: 1px solid #333; background: repeating-conic-gradient(#ccc 0 25%, #fff 0 50%) 0 0 / 8px 8px; }
.thumb i { position: absolute; right: 0; bottom: 0; width: 13px; height: 13px; padding: 1px; background: #535353; }
.sel .thumb::before { content: ""; position: absolute; inset: -3px; border: 1px solid #fff; clip-path: polygon(0 0, 10px 0, 10px 10px, 20px 10px, 20px 0, 100% 0, 100% 12px, 0 12px, 0 26px, 100% 26px, 100% 100%, 20px 100%, 20px 30px, 10px 30px, 10px 100%, 0 100%); }
.lscroll { display: flex; flex-direction: column; align-items: center; width: 15px; padding: 7px 0; background: #4a4a4a; color: #999; }
.lscroll i { width: 12px; height: 26px; margin: 4px 0 auto; background: #696969; }
.up { transform: rotate(180deg); }
.lfoot { display: flex; align-items: center; height: 25px; padding-left: 92px; border-top: 1px solid #404040; color: #d6d6d6; flex: none; }
.lfoot button { width: 27px; height: 24px; }
.lfoot .fx { font: italic bold 14px/16px "Liberation Serif", serif; }
.fx, .more { position: relative; }
.fx::after, .more::after { content: ""; position: absolute; right: 2px; bottom: 2px; border: 2px solid transparent; border-top-color: #e6e6e6; border-bottom: 0; }
```
